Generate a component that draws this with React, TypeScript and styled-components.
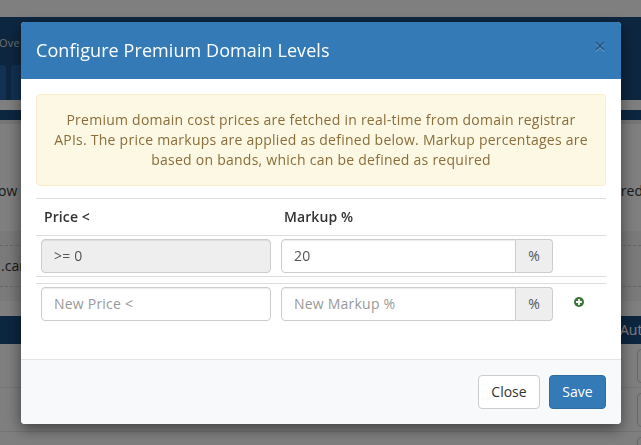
import React from "react";
import styled, { createGlobalStyle } from "styled-components";

const GlobalStyle = createGlobalStyle`
  *, *::before, *::after { box-sizing: border-box; }
  html, body { margin: 0; overflow: hidden; background: #fff; }
  body, input, button {
    font-family: "Open Sans", sans-serif;
    font-size: 14px;
    line-height: 20px;
    color: #333;
  }
`;

const Page = styled.div`
  width: 641px;
  height: 445px;
  overflow: hidden;
  display: flex;
  flex-direction: column;
  white-space: nowrap;
`;

const TopBar = styled.div`
  height: 17px;
  flex: none;
`;

const Navigation = styled.div`
  height: 83px;
  flex: none;
  background: #1b4d81;
  display: flex;
  flex-direction: column;
  justify-content: space-between;
`;

const NavLabel = styled.div`
  padding-top: 16px;
  font-size: 11px;
  letter-spacing: 0.2px;
  color: #ddd;
  margin-left: -1px;
`;

const Tabs = styled.div`
  display: flex;
  gap: 5px;
`;

const Tab = styled.div<{ $width: number }>`
  width: ${(p) => p.$width}px;
  height: 35px;
  background: #2463a6;
  border-radius: 0 4px 0 0;
  & + & {
    border-radius: 4px 4px 0 0;
  }
`;

const NavDivider = styled.div`
  flex: none;
  height: 10px;
  margin-top: 10px;
  background: #1a4d80;
`;

const Shade = styled.div`
  flex: none;
  height: 4px;
  background: #ececec;
`;

const IntroLine = styled.div`
  flex: none;
  height: 107px;
  padding-top: 57px;
  display: flex;
  justify-content: space-between;
  margin: 0 -2px;
`;

const SearchBand = styled.div`
  flex: none;
  height: 70px;
  padding: 14px 0;
  background: #f4f4f4;
`;

const Extensions = styled.div`
  height: 42px;
  border: dashed #ccc;
  border-width: 1px 0;
  line-height: 40px;
  padding-left: 1px;
`;

const ListHead = styled.div`
  flex: none;
  height: 28px;
  margin-top: 15px;
  padding-left: 620px;
  background: #1a4d80;
  color: #fff;
  line-height: 28px;
`;

const ListRow = styled.div`
  flex: none;
  height: 44px;
  display: grid;
  grid-template-columns: 178px 310px 101px 1fr;
  column-gap: 1px;
`;

const ListCell = styled.div`
  border-bottom: 1px solid #e8e8e8;
  padding: 5px 0 0 45px;
`;

const ListField = styled.div`
  width: 60px;
  height: 34px;
  border: 1px solid #ccc;
  border-radius: 4px;
`;

const Backdrop = styled.div`
  position: fixed;
  inset: 0;
  padding: 22px 20px 0 21px;
  background: rgba(0, 0, 0, 0.5);
`;

const Dialog = styled.div`
  width: 600px;
  height: 402px;
  display: flex;
  flex-direction: column;
  background: #fff;
  border-radius: 4px;
  box-shadow: 0 5px 15px rgba(0, 0, 0, 0.5);
  overflow: hidden;
`;

const Header = styled.div`
  height: 57px;
  flex: none;
  padding: 15px;
  display: flex;
  justify-content: space-between;
  background: #337ab7;
`;

const Title = styled.h4`
  margin: 0;
  font-size: 18px;
  font-weight: 400;
  line-height: 26px;
  letter-spacing: 0.08px;
  color: #fff;
`;

const Dismiss = styled.button`
  align-self: flex-start;
  margin: -2px 0 0;
  padding: 0;
  border: 0;
  background: none;
  opacity: 0.3;
  display: flex;
`;

const Body = styled.div`
  flex: 1;
  padding: 15px;
`;

const Notice = styled.div`
  height: 92px;
  padding: 15px;
  border: 1px solid #faebcc;
  border-radius: 4px;
  background: #fcf8e3;
  color: #8a6d3b;
  text-align: center;
  letter-spacing: 0.25px;
`;

const Levels = styled.div`
  margin-top: 12px;
`;

const LevelRow = styled.div<{ $heading?: boolean; $gap?: number }>`
  height: ${(p) => (p.$heading ? 37 : 41)}px;
  margin-top: ${(p) => p.$gap ?? 0}px;
  padding: ${(p) => (p.$heading ? "8px" : "3px 5px")};
  border-top: 1px solid #ddd;
  display: grid;
  grid-template-columns: ${(p) => (p.$heading ? "230px 262px" : "230px 272px")} 1fr;
  column-gap: 10px;
  font-weight: ${(p) => (p.$heading ? 600 : 400)};
  letter-spacing: ${(p) => (p.$heading ? 0.1 : 0)}px;
`;

const RowEnd = styled.div`
  border-top: 1px solid #ddd;
`;

const Field = styled.input`
  width: 100%;
  min-width: 0;
  height: 34px;
  padding: 5px 12px 7px;
  border: 1px solid #ccc;
  border-radius: 4px;
  background: #fff;
  color: #555;
  letter-spacing: 0.22px;
  box-shadow: inset 0 1px 1px rgba(0, 0, 0, 0.075);
  outline: 0;
  &:read-only {
    background: #eee;
  }
  &::placeholder {
    color: #999;
    opacity: 1;
  }
`;

const FieldGroup = styled.div`
  display: flex;
  ${Field} {
    border-radius: 4px 0 0 4px;
  }
`;

const Unit = styled.span`
  flex: none;
  width: 37px;
  height: 34px;
  border: 1px solid #ccc;
  border-left: 0;
  border-radius: 0 4px 4px 0;
  background: #eee;
  color: #555;
  line-height: 32px;
  text-align: center;
`;

const AddIcon = styled.svg`
  display: block;
  width: 10px;
  height: 10px;
  margin: 10px 0 0 11px;
`;

const Footer = styled.div`
  height: 65px;
  flex: none;
  padding: 15px;
  border-top: 1px solid #e5e5e5;
  background: #f8f9fb;
  display: flex;
  justify-content: flex-end;
  gap: 9px;
`;

const Button = styled.button<{ $primary?: boolean }>`
  height: 34px;
  width: ${(p) => (p.$primary ? 57 : 62)}px;
  padding: 0;
  border: 1px solid ${(p) => (p.$primary ? "#2e6da4" : "#ccc")};
  border-radius: 4px;
  background: ${(p) => (p.$primary ? "#337ab7" : "#fff")};
  color: ${(p) => (p.$primary ? "#fff" : "#333")};
`;

function PercentField(props: React.InputHTMLAttributes<HTMLInputElement>) {
  return (
    <FieldGroup>
      <Field {...props} />
      <Unit>%</Unit>
    </FieldGroup>
  );
}

export default function App() {
  return (
    <>
      <GlobalStyle />
      <Page>
        <TopBar />
        <Navigation>
          <NavLabel>Ove</NavLabel>
          <Tabs>
            <Tab $width={6} />
            <Tab $width={120} />
          </Tabs>
        </Navigation>
        <NavDivider />
        <Shade />
        <IntroLine>
          <span>ow</span>
          <span>red</span>
        </IntroLine>
        <SearchBand>
          <Extensions>.car</Extensions>
        </SearchBand>
        <ListHead>Aut</ListHead>
        {[0, 1, 2].map((row) => (
          <ListRow key={row}>
            <ListCell />
            <ListCell />
            <ListCell />
            <ListCell>
              <ListField />
            </ListCell>
          </ListRow>
        ))}
      </Page>
      <Backdrop>
        <Dialog role="dialog">
          <Header>
            <Title>Configure Premium Domain Levels</Title>
            <Dismiss aria-label="Close">
              <svg width="12" height="21" viewBox="0 0 12 21">
                <path d="M1.8 8.3l8.4 8M10.2 8.3l-8.4 8" stroke="#fff" strokeWidth="1.2" />
                <path d="M1.8 7l8.4 8M10.2 7l-8.4 8" stroke="#000" strokeWidth="1.7" />
              </svg>
            </Dismiss>
          </Header>
          <Body>
            <Notice>
              Premium domain cost prices are fetched in real-time from domain registrar APIs. The
              price markups are applied as defined below. Markup percentages are based on bands,
              which can be defined as required
            </Notice>
            <Levels>
              <LevelRow $heading>
                <span>Price &lt;</span>
                <span>Markup %</span>
              </LevelRow>
              <LevelRow>
                <Field defaultValue=">= 0" readOnly />
                <PercentField defaultValue="20" />
              </LevelRow>
              <RowEnd />
              <LevelRow $gap={6}>
                <Field placeholder="New Price <" />
                <PercentField placeholder="New Markup %" />
                <AddIcon viewBox="0 0 10 10">
                  <circle cx="5" cy="5" r="5" fill="#3c763d" />
                  <path d="M5 2.1v5.8M2.1 5h5.8" stroke="#fff" strokeWidth="1.8" />
                </AddIcon>
              </LevelRow>
            </Levels>
          </Body>
          <Footer>
            <Button>Close</Button>
            <Button $primary>Save</Button>
          </Footer>
        </Dialog>
      </Backdrop>
    </>
  );
}
